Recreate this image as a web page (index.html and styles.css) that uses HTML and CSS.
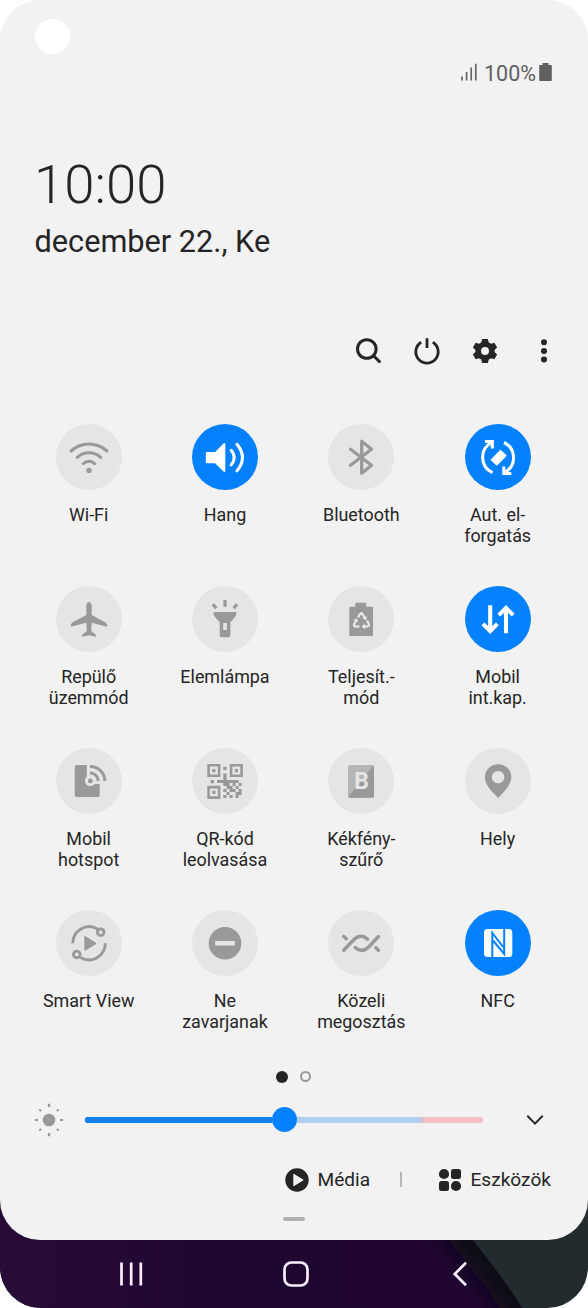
FILE: index.html
```html
<!DOCTYPE html>
<html lang="hu">
<head>
<meta charset="utf-8">
<title>Gyorsbeállítások</title>
<link rel="stylesheet" href="styles.css">
</head>
<body>
<div class="phone">
  <svg class="wallpaper" viewBox="0 0 588 120">
    <defs>
      <linearGradient id="purple" x1="0" y1="0" x2="1" y2="0">
        <stop offset="0" stop-color="#260c36"/><stop offset=".45" stop-color="#1f0630"/><stop offset="1" stop-color="#200631"/>
      </linearGradient>
      <clipPath id="hill"><path d="M0 0H425Q486 62 522 120H0Z"/></clipPath>
      <filter id="soft" x="-50%" y="-50%" width="200%" height="200%"><feGaussianBlur stdDeviation="9"/></filter>
    </defs>
    <rect width="588" height="120" fill="#222c2f"/>
    <g clip-path="url(#hill)">
      <rect width="530" height="120" fill="url(#purple)"/>
      <path d="M415 -10Q486 62 534 140" fill="none" stroke="#0f0716" stroke-width="36" filter="url(#soft)"/>
    </g>
  </svg>
  <main class="panel">
    <span class="camera"></span>
    <div class="status">
      <svg class="signal" viewBox="0 0 16 18"><path d="M1 13.500v4M5.600 9v8.500M10.200 4.500v13M14.800.7v16.800" stroke="#666" stroke-width="1.700"/></svg>
      <span class="percent">100%</span>
      <svg class="battery" viewBox="0 0 13 18"><path d="M3.500 0h6v2H12q.8 0 .8.8v14.400q0 .8-.8.8H1q-.8 0-.8-.8V2.800Q.2 2 1 2h2.500z" fill="#606060"/></svg>
    </div>
    <div class="clock"><span>10:00</span></div>
    <div class="date"><span>december 22., Ke</span></div>
    <div class="tools">
      <svg viewBox="0 0 32 32"><g fill="none" stroke="#252525" stroke-width="3"><circle cx="14.800" cy="14" r="9.300"/><path d="M21.300 20.500l7 7"/></g></svg>
      <svg viewBox="0 0 32 32"><g fill="none" stroke="#252525" stroke-width="2.800"><path d="M10.200 7.300a11.200 11.200 0 1 0 11.600 0M16 3.200v9.800"/></g></svg>
      <svg viewBox="0 0 32 32"><path fill="#252525" fill-rule="evenodd" d="M13.200 4h5.600l1 3.500 2.300 1.300 3.300-1 2.700 4.700-2.500 2.400v2.200l2.500 2.400-2.700 4.700-3.300-1-2.300 1.300-1 3.500h-5.600l-1-3.500-2.300-1.300-3.300 1-2.700-4.700 2.500-2.400v-2.200l-2.500-2.400 2.700-4.700 3.300 1 2.300-1.300zM16 12a4 4 0 1 0 0 8 4 4 0 0 0 0-8z"/></svg>
      <svg viewBox="0 0 32 32"><g fill="#252525"><circle cx="16" cy="7.300" r="3"/><circle cx="16" cy="16" r="3"/><circle cx="16" cy="24.500" r="3"/></g></svg>
    </div>

    <section class="tiles">
      <div class="tile"><svg class="icon" viewBox="0 0 66 66"><g fill="none" stroke="#999" stroke-width="3.100" stroke-linecap="round"><path d="M15 27Q23 20 33 20T51 27M21.300 33.300Q26.500 28.800 33 28.800T44.700 33.300M27.300 39.600Q30 37.300 33 37.300T38.700 39.600"/></g><circle cx="33" cy="46.400" r="2.700" fill="#999"/></svg><span>Wi-Fi</span></div>
      <div class="tile"><svg class="icon on" viewBox="0 0 66 66"><path fill="#fff" d="M15 28h8l8.500-8.500q1.800-1.200 1.800.8v26.500q0 2-1.800.8L23 39.300h-8q-1.200 0-1.200-1.200v-9q0-1.100 1.200-1.100z"/><path fill="none" stroke="#fff" stroke-width="3.100" stroke-linecap="round" d="M39.200 26.300Q45.500 33.500 39.200 40.800M45 20.300Q56 33.500 45 46.800"/></svg><span>Hang</span></div>
      <div class="tile"><svg class="icon" viewBox="0 0 66 66"><path fill="none" stroke="#999" stroke-width="3.300" stroke-linecap="round" stroke-linejoin="round" d="M22.500 25.200L43.500 41.200 33.700 49.300V17.200L43.500 25.200 22.500 41.200"/></svg><span>Bluetooth</span></div>
      <div class="tile"><svg class="icon on" viewBox="0 0 66 66"><g fill="none" stroke="#fff" stroke-width="3.100"><path d="M27.500 48.600A16.800 16.800 0 0 1 26.500 18.500M39 18.500A16.800 16.800 0 0 1 40.500 48"/><path d="M20 17.500H27.300V24.500M38.800 42.500V49.500H46.300"/></g><path fill="#fff" stroke="#fff" stroke-width="1.800" stroke-linejoin="round" d="M26.600 35.800L35.500 26.800 40.700 31.600 31.800 40.600z"/></svg><span>Aut. el-<br>forgatás</span></div>

      <div class="tile"><svg class="icon" viewBox="0 0 66 66"><path fill="#999" d="M33 16q2.700.5 2.700 4.500V29L50 36.800q1.400 1 1 3.900L35.700 36.800 35.200 45 39.300 48.200q1 .8.700 2.500L33 49.300 26 50.700q-.3-1.700.7-2.500L30.800 45 30.300 36.800 15 40.700q-.4-2.900 1-3.900L30.300 29V20.500q0-4 2.700-4.500z"/></svg><span>Repülő<br>üzemmód</span></div>
      <div class="tile"><svg class="icon" viewBox="0 0 66 66"><path fill="#999" fill-rule="evenodd" d="M21.700 26H44.300V28.700Q43.800 30.500 38.400 36.300V49.300Q38.400 51.300 36.400 51.300H29.700Q27.700 51.300 27.700 49.300V36.300Q22.200 30.500 21.700 28.700zM31.200 37V44H34.800V37z"/><path stroke="#999" stroke-width="3.200" d="M33 14v6.700M20.800 18.200l3.500 4M45.200 18.200l-3.500 4"/></svg><span>Elemlámpa</span></div>
      <div class="tile"><svg class="icon" viewBox="0 0 66 66"><path fill="#999" d="M28.300 16.700h9q1 0 1 1v3H44q1 0 1 1V49q0 1-1 1H22.300q-1 0-1-1V21.700q0-1 1-1h5v-3q0-1 1-1z"/><g fill="none" stroke="#e5e5e5" stroke-width="2.300"><path d="M30 31.500L32 28.200Q33.300 26.300 34.600 28.200L36.800 32M39 34.500L40.800 38Q41.600 40.500 38.800 40.500H36M31.500 40.500H27.800Q25 40.300 26.200 38L28.200 34.600"/></g><path fill="#e5e5e5" d="M38.800 30l-.4 4.300-4-1.700zM36.900 37.500v6l-3.500-3zM25.200 34l4-1.700.8 4.300z"/></svg><span>Teljesít.-<br>mód</span></div>
      <div class="tile"><svg class="icon on" viewBox="0 0 66 66"><path fill="none" stroke="#fff" stroke-width="4.100" d="M25.200 19.300V45M18 37.900L25.200 45 32.400 37.900M41 47.300V22M33.800 29.100L41 22 48.200 29.100"/></svg><span>Mobil<br>int.kap.</span></div>

      <div class="tile"><svg class="icon" viewBox="0 0 66 66"><path fill="#999" d="M20.700 17H30.800V28.800A5.300 5.300 0 0 0 35 38Q37.800 37.700 39 36H43.700V47Q43.700 49 41.700 49H20.700Q18.700 49 18.700 47V19Q18.700 17 20.700 17z"/><circle cx="34.300" cy="32.900" r="2.400" fill="#999"/><path fill="none" stroke="#999" stroke-width="2.900" d="M34 25A8 8 0 0 1 42.300 33M34 18.500A14.500 14.500 0 0 1 48.800 33"/></svg><span>Mobil<br>hotspot</span></div>
      <div class="tile"><svg class="icon" viewBox="0 0 66 66"><g fill="none" stroke="#999" stroke-width="2.600"><path d="M16.600 17.300h10.500v10.500H16.600zM39.100 17.300h10.500v10.500H39.100zM16.600 39.100h10.500v10.500H16.600z"/></g><path fill="#999" d="M20.300 21h3.200v3.200h-3.200zM42.800 21H46v3.200h-3.200zM20.300 42.800h3.200V46h-3.200zM31.300 18.700h3.300V22h-3.300zM18.700 32H22v3.300h-3.300zM25 32h6.300v-6.500h3.300V32h3v3h-3v3h-3.300v-3H25zM37.600 32h9v3h-9zM46.600 35h3v3h-3zM34.600 35h3v3h-3zM40.600 35h3v3h-3zM37.600 38h3v3h-3zM43.600 38h3v3h-3zM34.600 38h3v3h-3zM31.300 41h3.300v3h-3.300zM40.600 41h3v3h-3zM46.600 41h3v6h-3zM34.600 44h3v3h-3zM37.600 41h3v3h-3zM43.600 44h3v3h-3zM37.600 47h3v3h-3zM31.300 47h3.300v3h-3.300zM43.600 47h3v3h-3z"/></svg><span>QR-kód<br>leolvasása</span></div>
      <div class="tile"><svg class="icon" viewBox="0 0 66 66"><rect x="20" y="17" width="26" height="32.700" rx="2" fill="#b5b5b5"/><path fill="#999" d="M45.500 17.500Q46 18 46 19V47.700Q46 49.700 44 49.700H22Q20.800 49.700 20.300 49z"/><text class="letter" x="33.500" y="41.200" text-anchor="middle">B</text></svg><span>Kékfény-<br>szűrő</span></div>
      <div class="tile"><svg class="icon" viewBox="0 0 66 66"><path fill="#999" fill-rule="evenodd" d="M33.100 16.200C40.500 16.200 46.300 22 46.300 29.200 46.300 37 39 43.500 33.100 50 27.200 43.500 19.900 37 19.900 29.200 19.900 22 25.700 16.200 33.100 16.200zM33.100 23a6.200 6.200 0 1 0 0 12.400 6.200 6.200 0 0 0 0-12.400z"/></svg><span>Hely</span></div>

      <div class="tile"><svg class="icon" viewBox="0 0 66 66"><g fill="none" stroke="#999" stroke-width="2.900"><path d="M16.700 33.300A16.500 16.500 0 0 1 41.500 19M49.300 33.300A16.500 16.500 0 0 1 24.500 47.600"/><circle cx="44.700" cy="22.200" r="3.300"/><circle cx="20.800" cy="44.400" r="3.300"/></g><path fill="#999" d="M28.300 27q0-1.500 1.300-.8l10 6.200q1.200.9 0 1.800l-10 6.200q-1.300.7-1.300-.8z"/></svg><span>Smart View</span></div>
      <div class="tile"><svg class="icon" viewBox="0 0 66 66"><circle cx="33" cy="33.200" r="16.300" fill="#999"/><path fill="#e5e5e5" d="M23.200 31h19.600v4.400H23.200z"/></svg><span>Ne<br>zavarjanak</span></div>
      <div class="tile"><svg class="icon" viewBox="0 0 66 66"><g fill="none" stroke="#999" stroke-width="3.500" stroke-linecap="round"><path d="M15.800 26.500L18.300 28.700M15.800 40.200L24.500 31Q32.500 22.500 39.500 29.200M27.200 37.500Q34.300 44 41.700 36L50.400 26.500M47.900 37.800L50.400 40.200"/></g></svg><span>Közeli<br>megosztás</span></div>
      <div class="tile"><svg class="icon on" viewBox="0 0 66 66"><rect x="19" y="19" width="28.300" height="28" rx="3.500" fill="#fff"/><path fill="none" stroke="#0381fe" stroke-width="2" d="M27.300 47.500V23L38.200 37M39.200 18.500V44L28 30.500"/></svg><span>NFC</span></div>
    </section>

    <div class="pages"><i class="dot"></i><i class="ring"></i></div>

    <div class="brightness">
      <svg class="sun" viewBox="0 0 30 34"><circle cx="15" cy="17" r="6.300" fill="#999"/><path stroke="#999" stroke-width="2.200" d="M15 .8v3.200M15 30v3.200M.8 17H4M26 17h3.200"/><path stroke="#999" stroke-width="2" d="M5.300 6.500l1.900 1.500M24.700 6.500l-1.900 1.500M5.300 27.500L7.200 26M24.700 27.500L22.800 26"/></svg>
      <div class="track"><i class="filled"></i><i class="knob"></i><i class="rest"></i><i class="hot"></i></div>
      <svg class="chevron" viewBox="0 0 18 12"><path d="M1.300 1.800L9 9.600l7.700-7.800" fill="none" stroke="#252525" stroke-width="2"/></svg>
    </div>

    <div class="links">
      <svg class="link-icon" viewBox="0 0 24 24"><circle cx="12" cy="12" r="11.700" fill="#252525"/><path fill="#f2f2f2" d="M8.300 6.500q0-.8.800-.4l9 5.300q.8.600 0 1.200l-9 5.300q-.8.400-.8-.4z"/></svg>
      <span class="media">Média</span>
      <i class="divider"></i>
      <svg class="link-icon" viewBox="0 0 24 24"><g fill="#252525"><circle cx="6" cy="6" r="5.100"/><rect x="13" y="1" width="10" height="10" rx="2.500"/><rect x="1" y="13" width="10" height="10" rx="2.500"/><circle cx="18" cy="18" r="5.100"/></g></svg>
      <span class="devices">Eszközök</span>
    </div>
    <div class="grip"><i></i></div>
  </main>
  <nav class="navbar">
    <svg viewBox="0 0 28 28"><path d="M4.500 2.500v23M14.200 2.500v23M23.800 2.500v23" stroke="#f7effb" stroke-width="2.700"/></svg>
    <svg viewBox="0 0 28 28"><rect x="2.500" y="2.500" width="23" height="23" rx="7" fill="none" stroke="#f7effb" stroke-width="2.700"/></svg>
    <svg viewBox="0 0 28 28"><path d="M20 2.800L8.800 14 20 25.200" fill="none" stroke="#f7effb" stroke-width="2.700"/></svg>
  </nav>
</div>
</body>
</html>
```
FILE: styles.css
```css
* { box-sizing: border-box; }
body { margin: 0; background: #fff; font-family: Roboto, "Noto Sans", sans-serif; color: #252525; }
svg { display: block; flex: none; }
.phone { position: relative; width: 588px; height: 1308px; overflow: hidden; border-radius: 41px; background: #f2f2f2; }
.wallpaper { position: absolute; left: 0; bottom: 0; width: 588px; height: 120px; }
.panel { position: relative; height: 1239.500px; background: #f2f2f2; border-radius: 0 0 40px 40px; }
.camera { position: absolute; left: 35px; top: 18.500px; width: 35px; height: 35px; border-radius: 50%; background: #fff; }

.status { display: flex; align-items: flex-end; justify-content: flex-end; height: 81px; padding-right: 36.500px; color: #606060; }
.signal { width: 16px; height: 18px; margin-right: 7px; }
.percent { font-size: 21.500px; line-height: 15px; width: 52px; margin-right: 2.500px; white-space: nowrap; }
.battery { width: 13px; height: 18px; }

.clock { height: 137px; padding: 68.500px 0 0 34px; font-size: 54.500px; line-height: 68px; font-weight: 300; }
.date { height: 116.500px; padding: 4px 0 0 34.500px; font-size: 30.700px; line-height: 40px; }

.tools { display: flex; justify-content: flex-end; gap: 26.800px; height: 89px; padding: 0.500px 27.800px 0 0; }
.tools svg { width: 32px; height: 32px; }

.tiles { display: grid; grid-template-columns: repeat(4, 136.330px); grid-auto-rows: 162px; padding-left: 20.500px; height: 643.500px; }
.tile { display: flex; flex-direction: column; align-items: center; gap: 15.700px; text-align: center; font-size: 17.900px; line-height: 20.700px; }
.icon { width: 66px; height: 66px; border-radius: 50%; background: #e5e5e5; }
.icon.on { background: #0381fe; }
.letter { font: 700 23px Roboto, sans-serif; fill: #e5e5e5; }

.pages { display: flex; align-items: center; gap: 12px; height: 19px; padding-left: 275.700px; }
.dot { width: 12px; height: 12px; border-radius: 50%; background: #252525; }
.ring { width: 11.500px; height: 11.500px; border: 2.500px solid #999; border-radius: 50%; }

.brightness { display: flex; align-items: center; height: 67.500px; padding-left: 34px; }
.sun { width: 30px; height: 34px; margin-right: 21px; }
.track { display: flex; align-items: center; width: 398px; margin-right: 43px; }
.filled { width: 187px; height: 5.500px; background: #1580ee; border-radius: 2px 0 0 2px; }
.knob { width: 25px; height: 25px; background: #0381fe; border-radius: 50%; }
.rest { width: 125px; height: 5.500px; background: #b0cff0; }
.hot { width: 61px; height: 5.500px; background: #f2c0c0; border-radius: 0 2px 2px 0; }
.chevron { width: 18px; height: 12px; }

.links { display: flex; align-items: center; height: 52px; padding-left: 284.500px; font-size: 19.100px; line-height: 24px; }
.link-icon { width: 24px; height: 24px; }
.media { width: 83px; padding: 1.500px 0 0 9px; }
.divider { width: 1.500px; height: 15px; margin: -1px 36px 0 8.500px; background: #b5b5b5; }
.devices { padding: 1.500px 0 0 9px; }
.grip { display: flex; justify-content: center; padding-top: 11.500px; }
.grip i { width: 21.500px; height: 3.500px; border-radius: 2px; background: #b0b0b0; }

.navbar { position: relative; display: flex; gap: 136.500px; height: 68.500px; padding: 20px 0 0 117.300px; }
.navbar svg { width: 28px; height: 28px; }
```
